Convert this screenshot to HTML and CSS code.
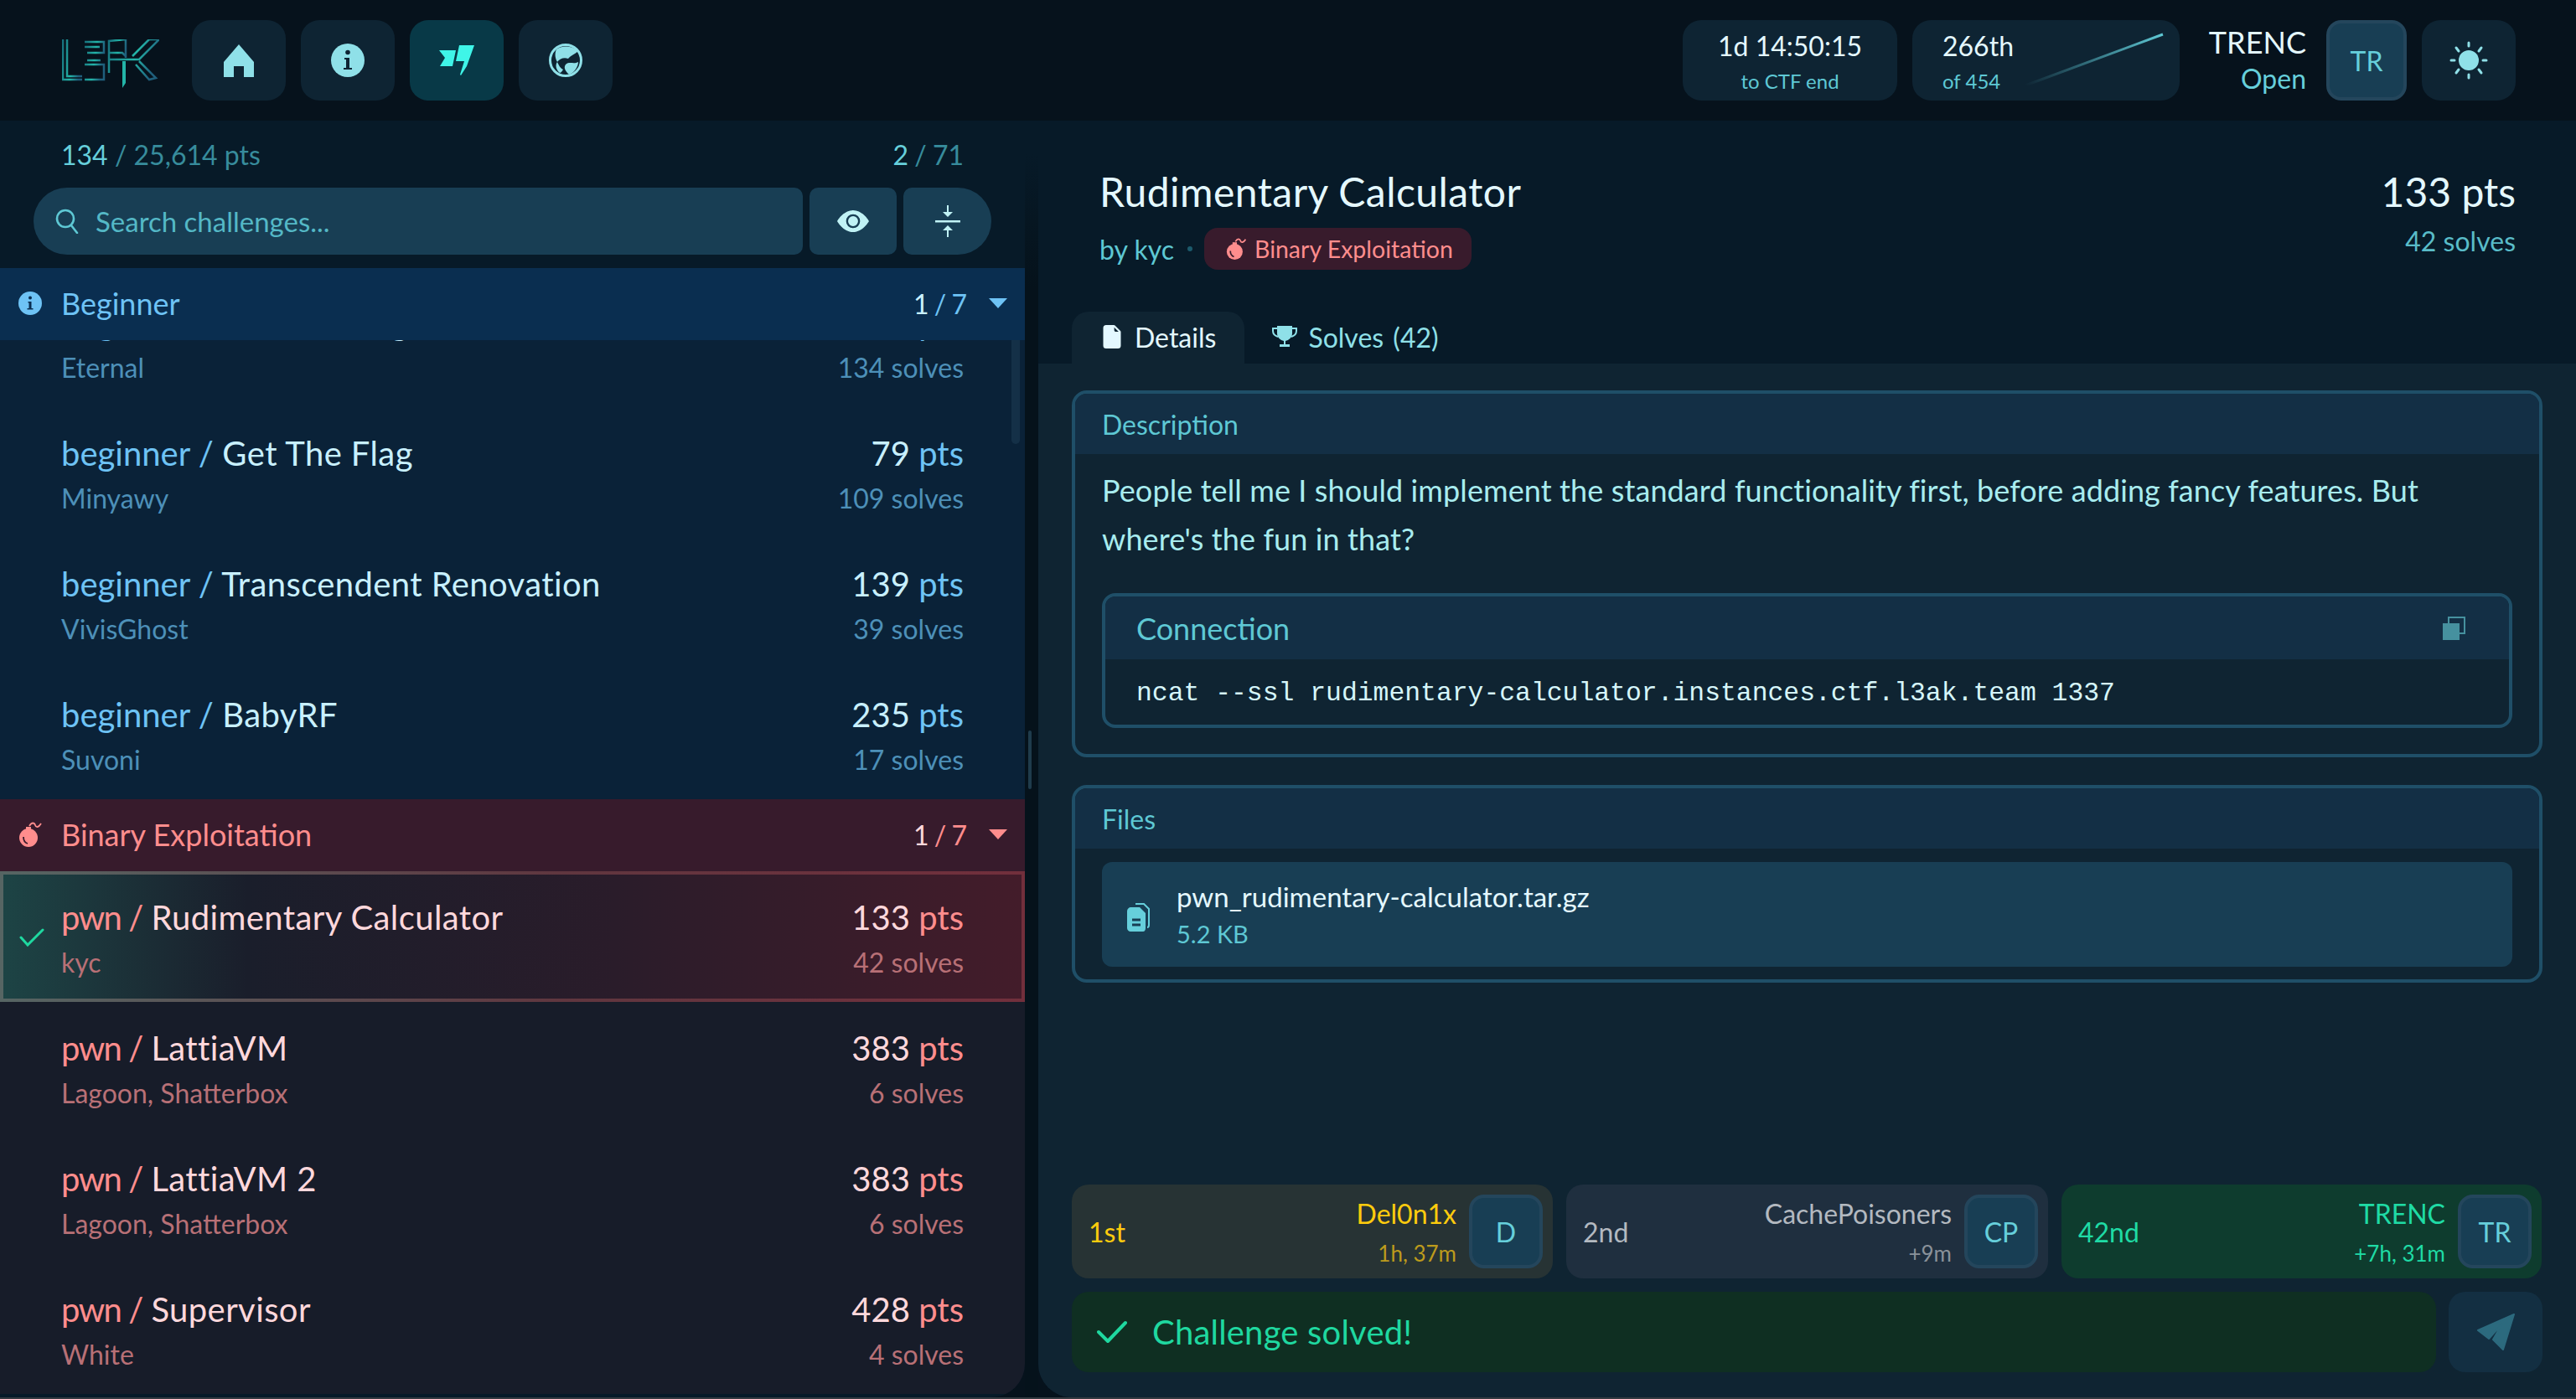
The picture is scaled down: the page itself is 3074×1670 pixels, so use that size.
FILE: index.html
```html
<!DOCTYPE html>
<html lang="en">
<head>
  <meta charset="UTF-8">
  <title>L3AK CTF - Challenges</title>
  <link rel="stylesheet" href="styles.css">
</head>
<body>
<div class="app">

  <header class="topbar">
    <svg class="logo" viewBox="0 0 116 58" fill="none" stroke="url(#logo-grad)" stroke-width="2.5">
      <defs>
        <linearGradient id="logo-grad" x1="0" y1="0" x2="1" y2="0.3">
          <stop offset="0" stop-color="#17707c"/>
          <stop offset="0.6" stop-color="#23b5a8"/>
          <stop offset="1" stop-color="#1f5f7c"/>
        </linearGradient>
      </defs>
      <path d="M1 0V48H24M6 0V44H24"/>
      <path d="M27 3H50V16H30M27 9H45M27 30H50V48H27M30 25H46"/>
      <path d="M56 16V2L76 0V22M56 40V16H72L76 20"/>
      <path d="M56 24H92L116 0H104L84 20M92 26L112 46L104 48L88 30"/>
      <path d="M72 26V58L76 52V26Z" fill="#23b5a8" stroke="none"/>
    </svg>
    <nav class="nav">
      <a class="nav-btn">
        <svg width="38" height="40" viewBox="0 0 38 40" fill="#8fe0e8"><path d="M19 1 37 22V40H25V27H13V40H1V22Z"/></svg>
      </a>
      <a class="nav-btn">
        <svg width="40" height="40" viewBox="0 0 40 40"><circle cx="20" cy="20" r="20" fill="#8fe0e8"/><circle cx="20" cy="10.5" r="2.8" fill="#0e2433"/><path d="M16 17H22V29H25V31H15V29H18V19H16Z" fill="#0e2433"/></svg>
      </a>
      <a class="nav-btn active">
        <svg width="44" height="38" viewBox="0 0 44 38" fill="#3ff5e8"><path d="M1 7H21L17 26H2L8 16Z"/><path d="M25 1H43L34 26 27 37 26 36 31 20H21Z"/></svg>
      </a>
      <a class="nav-btn">
        <svg width="40" height="40" viewBox="0 0 40 40" fill="#8fe0e8"><circle cx="20" cy="20" r="18.500" fill="none" stroke="#8fe0e8" stroke-width="3"/><path d="M9 7C15 2 27 2 35 9 31 13 26 14 23 18 18 16 13 18 10 22 7 17 7 11 9 7Z"/><path d="M20 25C24 21 30 25 35 22 35 28 30 35 24 37 20 33 17 29 20 25Z"/><path d="M10 22C12 26 13 29 17 31 15 34 14 35 13 35 9 32 7 26 10 22Z"/></svg>
      </a>
    </nav>
    <div class="top-right">
      <div class="stat-card timer">
        <div class="stat-main">1d 14:50:15</div>
        <div class="stat-sub">to CTF end</div>
      </div>
      <div class="stat-card rank">
        <div>
          <div class="stat-main">266th</div>
          <div class="stat-sub">of 454</div>
        </div>
        <svg class="spark" width="168" height="66" viewBox="0 0 168 66" fill="none">
          <defs>
            <linearGradient id="spark-grad" x1="0" y1="1" x2="1" y2="0">
              <stop offset="0" stop-color="#5ec8d4" stop-opacity="0"/>
              <stop offset="1" stop-color="#5ec8d4"/>
            </linearGradient>
          </defs>
          <path d="M2 64 166 3" stroke="url(#spark-grad)" stroke-width="3"/>
        </svg>
      </div>
      <div class="me">
        <div class="me-name">TRENC</div>
        <div class="me-state">Open</div>
      </div>
      <div class="avatar avatar-top">TR</div>
      <a class="nav-btn theme">
        <svg width="46" height="46" viewBox="0 0 46 46" stroke="#8fe0e8" stroke-width="3" stroke-linecap="round"><circle cx="23" cy="23" r="12" fill="#8fe0e8" stroke="none"/><path d="M23 2V6M23 40V44M2 23H6M40 23H44M8 8 11 12M35 34 38 38M38 8 35 12M11 34 8 38"/></svg>
      </a>
    </div>
  </header>

  <div class="layout">
    <aside class="sidebar">
      <div class="side-stats">
        <span><b class="hi">134</b> / 25,614 pts</span>
        <span class="mono-count"><b class="hi">2</b> / 71</span>
      </div>
      <div class="search-row">
        <div class="search">
          <svg width="28" height="30" viewBox="0 0 28 30" fill="none" stroke="#5ec8d4" stroke-width="2.6" stroke-linecap="round"><circle cx="12" cy="12" r="10"/><path d="M19 20 26 29"/></svg>
          <span>Search challenges...</span>
        </div>
        <div class="search-btn">
          <svg width="38" height="38" viewBox="0 0 16 16" fill="#c0f2f5"><path d="M10.5 8a2.5 2.5 0 1 1-5 0 2.5 2.5 0 0 1 5 0z"/><path d="M0 8s3-5.5 8-5.5S16 8 16 8s-3 5.5-8 5.5S0 8 0 8zm8 3.5a3.5 3.5 0 1 0 0-7 3.5 3.5 0 0 0 0 7z"/></svg>
        </div>
        <div class="search-btn last">
          <svg width="30" height="38" viewBox="0 0 30 38" fill="#c0f2f5"><path d="M0 18H30V20.500H0Z"/><path d="M14 0H16V8H21L15 14 9 8H14Z"/><path d="M14 38H16V30H21L15 24 9 30H14Z"/></svg>
        </div>
      </div>

      <div class="list">
        <section class="group beginner">
          <div class="group-head">
            <svg class="group-icon" width="28" height="28" viewBox="0 0 28 28"><circle cx="14" cy="14" r="14" fill="#6ec3f5"/><circle cx="14" cy="7.500" r="2" fill="#0a2e50"/><path d="M11.500 12H15.500V20H17.500V21.500H10.500V20H12.500V13.500H11.500Z" fill="#0a2e50"/></svg>
            <span class="group-name">Beginner</span>
            <span class="group-count"><b>1</b> / 7</span>
            <span class="caret"></span>
          </div>
          <div class="row first">
            <div class="row-text">
              <div class="row-title"><span class="prefix">beginner /</span> Discord Flag</div>
              <div class="row-sub">Eternal</div>
            </div>
            <div class="row-num">
              <div class="row-title">61 <span class="unit">pts</span></div>
              <div class="row-sub">134 solves</div>
            </div>
          </div>
          <div class="row">
            <div class="row-text">
              <div class="row-title"><span class="prefix">beginner /</span> Get The Flag</div>
              <div class="row-sub">Minyawy</div>
            </div>
            <div class="row-num">
              <div class="row-title">79 <span class="unit">pts</span></div>
              <div class="row-sub">109 solves</div>
            </div>
          </div>
          <div class="row">
            <div class="row-text">
              <div class="row-title"><span class="prefix">beginner /</span> Transcendent Renovation</div>
              <div class="row-sub">VivisGhost</div>
            </div>
            <div class="row-num">
              <div class="row-title">139 <span class="unit">pts</span></div>
              <div class="row-sub">39 solves</div>
            </div>
          </div>
          <div class="row">
            <div class="row-text">
              <div class="row-title"><span class="prefix">beginner /</span> BabyRF</div>
              <div class="row-sub">Suvoni</div>
            </div>
            <div class="row-num">
              <div class="row-title">235 <span class="unit">pts</span></div>
              <div class="row-sub">17 solves</div>
            </div>
          </div>
        </section>

        <section class="group pwn">
          <div class="group-head">
            <svg class="group-icon" width="30" height="30" viewBox="0 0 30 30"><circle cx="12" cy="19" r="11" fill="#ff8d8d"/><path d="M9 6H15V10H9Z" fill="#ff8d8d"/><path d="M13 5C16 0 19 1 20 4S24 7 27 2" fill="none" stroke="#ff8d8d" stroke-width="1.800"/><path d="M6 18C6 22 8 25 11 26" fill="none" stroke="#371b2c" stroke-width="1.800"/></svg>
            <span class="group-name">Binary Exploitation</span>
            <span class="group-count"><b>1</b> / 7</span>
            <span class="caret"></span>
          </div>
          <div class="row selected">
            <svg class="row-check" width="30" height="22" viewBox="0 0 30 22" fill="none" stroke="#1fd8a0" stroke-width="3" stroke-linecap="round"><path d="M2 11 10 20 28 2"/></svg>
            <div class="row-text">
              <div class="row-title"><span class="prefix">pwn /</span> Rudimentary Calculator</div>
              <div class="row-sub">kyc</div>
            </div>
            <div class="row-num">
              <div class="row-title">133 <span class="unit">pts</span></div>
              <div class="row-sub">42 solves</div>
            </div>
          </div>
          <div class="row">
            <div class="row-text">
              <div class="row-title"><span class="prefix">pwn /</span> LattiaVM</div>
              <div class="row-sub">Lagoon, Shatterbox</div>
            </div>
            <div class="row-num">
              <div class="row-title">383 <span class="unit">pts</span></div>
              <div class="row-sub">6 solves</div>
            </div>
          </div>
          <div class="row">
            <div class="row-text">
              <div class="row-title"><span class="prefix">pwn /</span> LattiaVM 2</div>
              <div class="row-sub">Lagoon, Shatterbox</div>
            </div>
            <div class="row-num">
              <div class="row-title">383 <span class="unit">pts</span></div>
              <div class="row-sub">6 solves</div>
            </div>
          </div>
          <div class="row">
            <div class="row-text">
              <div class="row-title"><span class="prefix">pwn /</span> Supervisor</div>
              <div class="row-sub">White</div>
            </div>
            <div class="row-num">
              <div class="row-title">428 <span class="unit">pts</span></div>
              <div class="row-sub">4 solves</div>
            </div>
          </div>
        </section>
      </div>
      <div class="scrollbar"></div>
    </aside>

    <div class="gutter"><div class="handle"></div></div>

    <main class="main">
      <div class="chal-head">
        <div>
          <h1 class="chal-title">Rudimentary Calculator</h1>
          <div class="chal-meta">
            <span>by kyc</span>
            <span class="dot"></span>
            <span class="pill">
              <svg width="26" height="28" viewBox="0 0 30 30"><circle cx="12" cy="19" r="11" fill="#ff8d8d"/><path d="M9 6H15V10H9Z" fill="#ff8d8d"/><path d="M13 5C16 0 19 1 20 4S24 7 27 2" fill="none" stroke="#ff8d8d" stroke-width="2"/><path d="M6 18C6 22 8 25 11 26" fill="none" stroke="#381b2c" stroke-width="2"/></svg>
              Binary Exploitation
            </span>
          </div>
        </div>
        <div class="chal-score">
          <div class="chal-pts">133 pts</div>
          <div class="chal-solves">42 solves</div>
        </div>
      </div>

      <div class="tabs">
        <div class="tab active">
          <svg width="22" height="28" viewBox="2 0 12 16" fill="#e4f8ff"><path d="M4 0h5.293A1 1 0 0 1 10 .293L13.707 4a1 1 0 0 1 .293.707V14a2 2 0 0 1-2 2H4a2 2 0 0 1-2-2V2a2 2 0 0 1 2-2zm5.500 1.500v2a1 1 0 0 0 1 1h2l-3-3z"/></svg>
          Details
        </div>
        <div class="tab">
          <svg width="30" height="26" viewBox="0 0 30 26" fill="#8fe0e8"><path d="M6 0H24V9C24 14 20 17 16 18V22H21V25H9V22H14V18C10 17 6 14 6 9Z"/><path d="M6 3H1V6C1 10 4 12 7 13M24 3H29V6C29 10 26 12 23 13" fill="none" stroke="#8fe0e8" stroke-width="2"/></svg>
          Solves (42)
        </div>
      </div>

      <div class="content">
        <section class="box">
          <div class="box-head">Description</div>
          <div class="box-body">
            <p class="desc">People tell me I should implement the standard functionality first, before adding fancy features. But where's the fun in that?</p>
            <div class="conn">
              <div class="conn-head">
                <span>Connection</span>
                <svg width="28" height="28" viewBox="0 0 28 28" fill="none"><rect x="8" y="1" width="19" height="19" stroke="#46919f" stroke-width="2"/><rect x="1" y="8" width="20" height="20" fill="#46919f"/></svg>
              </div>
              <div class="conn-code">ncat --ssl rudimentary-calculator.instances.ctf.l3ak.team 1337</div>
            </div>
          </div>
        </section>

        <section class="box files">
          <div class="box-head">Files</div>
          <div class="box-body">
            <div class="file">
              <svg width="28" height="34" viewBox="0 0 28 34" fill="none"><path d="M10 1H20L26 7V26C26 28 25 29 24 29" stroke="#66cfdb" stroke-width="2"/><path d="M5 5H15L22 12V30C22 32 21 34 19 34H4C2 34 0 32 0 30V10C0 7 2 5 5 5Z" fill="#66cfdb"/><path d="M6 20H16M6 26H16" stroke="#183e54" stroke-width="3"/></svg>
              <div class="file-text">
                <div class="file-name">pwn_rudimentary-calculator.tar.gz</div>
                <div class="file-size">5.2 KB</div>
              </div>
            </div>
          </div>
        </section>

        <div class="podium">
          <div class="solver gold">
            <span class="place">1st</span>
            <div class="solver-info">
              <div class="solver-name">Del0n1x</div>
              <div class="solver-time">1h, 37m</div>
            </div>
            <div class="avatar">D</div>
          </div>
          <div class="solver silver">
            <span class="place">2nd</span>
            <div class="solver-info">
              <div class="solver-name">CachePoisoners</div>
              <div class="solver-time">+9m</div>
            </div>
            <div class="avatar">CP</div>
          </div>
          <div class="solver mine">
            <span class="place">42nd</span>
            <div class="solver-info">
              <div class="solver-name">TRENC</div>
              <div class="solver-time">+7h, 31m</div>
            </div>
            <div class="avatar">TR</div>
          </div>
        </div>

        <div class="flag-row">
          <div class="flag">
            <svg width="36" height="28" viewBox="0 0 36 28" fill="none" stroke="#1fd8a0" stroke-width="4" stroke-linecap="round" stroke-linejoin="round"><path d="M2 14 13 25 34 3"/></svg>
            Challenge solved!
          </div>
          <div class="send">
            <svg width="46" height="44" viewBox="0 0 46 44" fill="#2c6a7e" stroke="#2c6a7e" stroke-width="2" stroke-linejoin="round"><path d="M45 1 2 20 15 30 31 12 20 31 32 43Z"/></svg>
          </div>
        </div>
      </div>
    </main>
  </div>
</div>
</body>
</html>
```

FILE: styles.css
```css
* {
  box-sizing: border-box;
}

html, body {
  margin: 0;
  height: 100%;
  overflow: hidden;
}

body {
  font-family: "Lato", "Liberation Sans", sans-serif;
  background-color: #06121c;
  color: #e4f8ff;
}

b {
  font-weight: inherit;
}

.app {
  height: 1670px;
  display: flex;
  flex-direction: column;
  border-bottom: 2px solid #333a40;
}

/* Top bar */
.topbar {
  height: 144px;
  flex: none;
  display: flex;
  align-items: center;
  padding: 0 72px 0 74px;
}

.logo {
  width: 116px;
  height: 58px;
  margin: 8px 39px 0 0;
}

.nav {
  display: flex;
  gap: 18px;
}

.nav-btn {
  width: 112px;
  height: 96px;
  border-radius: 22px;
  background-color: #0e2433;
  display: flex;
  align-items: center;
  justify-content: center;
}

.nav-btn.active {
  background-color: #083947;
}

.top-right {
  margin-left: auto;
  display: flex;
  align-items: center;
}

.stat-card {
  height: 96px;
  border-radius: 22px;
  background-color: #0e2433;
}

.stat-main {
  font-size: 32px;
  line-height: 40px;
}

.stat-sub {
  font-size: 24px;
  line-height: 32px;
  margin-top: 6px;
  color: #5ec8d4;
}

.timer {
  width: 256px;
  padding-top: 11px;
  text-align: center;
}

.rank {
  width: 319px;
  margin-left: 18px;
  padding: 11px 18px 0 36px;
  display: flex;
  justify-content: space-between;
}

.spark {
  margin-top: 3px;
}

.me {
  width: 151px;
  text-align: right;
}

.me-name {
  font-size: 36px;
  line-height: 44px;
}

.me-state {
  font-size: 32px;
  line-height: 44px;
  color: #66cfdb;
}

.avatar {
  width: 88px;
  height: 88px;
  flex: none;
  border: 4px solid #24465c;
  border-radius: 18px;
  background-color: #183e54;
  color: #66cfdb;
  font-size: 32px;
  display: flex;
  align-items: center;
  justify-content: center;
}

.avatar-top {
  width: 96px;
  height: 96px;
  margin: 0 18px 0 24px;
}

.theme {
  width: 112px;
}

/* Page split */
.layout {
  flex: 1;
  min-height: 0;
  display: flex;
}

.sidebar {
  width: 1223px;
  flex: none;
  position: relative;
  overflow: hidden;
  display: flex;
  flex-direction: column;
  background-color: #071a28;
  border-bottom-right-radius: 40px;
}

.gutter {
  width: 16px;
  flex: none;
  background: linear-gradient(#071a28 40px, #05121b 200px);
  padding-top: 728px;
  display: flex;
  justify-content: center;
}

.handle {
  width: 4px;
  height: 70px;
  margin-left: -4px;
  border-radius: 2px;
  background-color: #1f3c4c;
}

.side-stats {
  height: 80px;
  flex: none;
  display: flex;
  justify-content: space-between;
  align-items: center;
  padding: 0 73px;
  font-size: 32px;
  color: #378c9c;
}

.mono-count {
  word-spacing: -1px;
}

.hi {
  color: #66cfdb;
}

.search-row {
  height: 80px;
  flex: none;
  display: flex;
  gap: 8px;
  margin: 0 40px 16px;
}

.search {
  width: 918px;
  display: flex;
  align-items: center;
  gap: 20px;
  padding-left: 26px;
  background-color: #183e54;
  border-radius: 40px 10px 10px 40px;
  font-size: 33px;
  color: #54b8c6;
}

.search-btn {
  width: 104px;
  display: flex;
  align-items: center;
  justify-content: center;
  background-color: #183e54;
  border-radius: 10px;
}

.search-btn.last {
  width: 105px;
  border-radius: 10px 40px 40px 10px;
}

/* Challenge list */
.list {
  flex: 1;
  overflow: hidden;
}

.group-head {
  height: 86px;
  position: relative;
  z-index: 1;
  display: flex;
  align-items: center;
  padding: 0 21px 2px 22px;
  font-size: 36px;
}

.group-icon {
  flex: none;
}

.group-name {
  margin-left: 23px;
}

.pwn .group-name {
  margin-left: 21px;
}

.group-count {
  margin-left: auto;
  font-size: 32px;
  word-spacing: -2px;
}

.caret {
  width: 0;
  height: 0;
  margin-left: 26px;
  border-left: 11px solid transparent;
  border-right: 11px solid transparent;
  border-top: 12px solid currentColor;
}

.row {
  height: 156px;
  position: relative;
  display: flex;
  justify-content: space-between;
  padding: 30px 73px 0;
}

.row.first {
  margin-top: -76px;
}

.row-title {
  font-size: 40px;
  line-height: 50px;
}

.row-text .row-title {
  letter-spacing: 0.4px;
}

.row-sub {
  font-size: 32px;
  line-height: 42px;
  margin-top: 8px;
}

.row-num {
  text-align: right;
}

.scrollbar {
  position: absolute;
  left: 1207px;
  top: 236px;
  width: 10px;
  height: 150px;
  border-radius: 5px;
  background-color: rgba(120, 180, 210, 0.1);
}

.beginner {
  background-color: #0a2238;
  color: #c8f0ff;
}

.beginner .group-head {
  background-color: #0a2e50;
  color: #6ec3f5;
}

.beginner .group-count b {
  color: #c8f0ff;
}

.beginner .prefix,
.beginner .unit {
  color: #6ec3f5;
}

.beginner .prefix {
  letter-spacing: 0;
}

.beginner .row-sub {
  color: #4d90b8;
}

.pwn {
  background-color: #171c29;
  color: #ffd8dc;
}

.pwn .group-head {
  background-color: #371b2c;
  color: #ff8d8d;
}

.pwn .group-count b {
  color: #ffd8dc;
}

.pwn .prefix,
.pwn .unit {
  color: #ff8d8d;
}

.pwn .prefix {
  letter-spacing: -1.5px;
}

.pwn .row-sub {
  color: #b87076;
}

.row.selected {
  padding: 26px 69px 0;
  border: 4px solid;
  border-image: linear-gradient(90deg, #566563, #60363f 55%, #722f3c) 1;
  background: linear-gradient(90deg, #1d4445, #1a1e2b 24%, #2a1c2a 60%, #431c2a);
}

.row-check {
  position: absolute;
  left: 19px;
  top: 64px;
}

/* Challenge panel */
.main {
  flex: 1;
  min-width: 0;
  display: flex;
  flex-direction: column;
  overflow: hidden;
  background-color: #071a28;
  border-bottom-left-radius: 40px;
}

.chal-head {
  height: 228px;
  flex: none;
  display: flex;
  justify-content: space-between;
  padding: 54px 72px 0 73px;
}

.chal-title {
  margin: 0;
  font-size: 48px;
  font-weight: 400;
  line-height: 62px;
  letter-spacing: 0.45px;
}

.chal-meta {
  display: flex;
  align-items: center;
  margin-top: 12px;
  font-size: 32px;
  color: #5ec8d4;
}

.dot {
  width: 6px;
  height: 6px;
  margin: 0 14px 0 16px;
  border-radius: 50%;
  background-color: #1c5a6c;
}

.pill {
  height: 50px;
  width: 319px;
  display: flex;
  align-items: center;
  gap: 8px;
  padding-left: 26px;
  border-radius: 16px;
  background-color: #381b2c;
  color: #ff8d8d;
  font-size: 28.5px;
}

.chal-score {
  text-align: right;
}

.chal-pts {
  font-size: 48px;
  line-height: 62px;
}

.chal-solves {
  font-size: 32px;
  line-height: 40px;
  margin-top: 8px;
  color: #59bcc8;
}

.tabs {
  height: 62px;
  flex: none;
  display: flex;
  padding-left: 40px;
}

.tab {
  display: flex;
  align-items: center;
  gap: 16px;
  padding: 0 34px 2px 37px;
  font-size: 32px;
  color: #8fe0e8;
  border-radius: 20px 20px 0 0;
}

.tab + .tab {
  padding-left: 33px;
  gap: 13px;
  word-spacing: 3px;
}

.tab.active {
  background-color: #0f2432;
  color: #e4f8ff;
}

.content {
  flex: 1;
  min-height: 0;
  display: flex;
  flex-direction: column;
  padding: 32px 40px 30px;
  background-color: #0f2432;
}

.box {
  border: 4px solid #1f4f68;
  border-radius: 18px;
  overflow: hidden;
}

.box-head {
  height: 72px;
  display: flex;
  align-items: center;
  padding-left: 32px;
  background-color: #132f45;
  color: #5ec8d4;
  font-size: 32px;
}

.box-body {
  padding: 15px 32px 31px;
}

.desc {
  margin: 0 0 36px;
  font-size: 36px;
  line-height: 57.6px;
  letter-spacing: 0.1px;
  color: #a8ecef;
}

.conn {
  height: 161px;
  border: 4px solid #1f4f68;
  border-radius: 16px;
  overflow: hidden;
}

.conn-head {
  height: 75px;
  display: flex;
  justify-content: space-between;
  align-items: center;
  padding: 0 52px 0 37px;
  background-color: #132f45;
  color: #5ec8d4;
  font-size: 36px;
}

.conn-code {
  padding: 22px 37px 0;
  font-family: "Liberation Mono", monospace;
  font-size: 31.4px;
  line-height: 38px;
  color: #d6f6fa;
}

.files {
  margin-top: 33px;
}

.files .box-body {
  padding: 16px 32px 15px;
}

.file {
  height: 125px;
  display: flex;
  align-items: center;
  gap: 31px;
  padding-left: 30px;
  border-radius: 12px;
  background-color: #183e54;
}

.file svg {
  margin-top: 6px;
}

.file-name {
  font-size: 33px;
  line-height: 40px;
}

.file-size {
  margin-top: 6px;
  font-size: 29px;
  line-height: 38px;
  color: #5ec8d4;
}

.podium {
  margin-top: auto;
  display: grid;
  grid-template-columns: 574px 575px 573px;
  gap: 16px;
}

.solver {
  height: 112px;
  display: flex;
  align-items: center;
  padding: 0 12px 0 20px;
  border-radius: 20px;
}

.solver-info {
  margin: 0 15px 0 auto;
  text-align: right;
}

.place {
  font-size: 32px;
}

.solver-name {
  font-size: 32px;
  line-height: 46px;
}

.solver-time {
  font-size: 26px;
  line-height: 36px;
  margin-top: 6px;
}

.gold {
  background-color: #273334;
  color: #ffcc0d;
}

.gold .solver-time {
  color: #bd9b1c;
}

.silver {
  background-color: #1f2f3f;
  color: #b3b9c0;
}

.silver .solver-time {
  color: #8a929a;
}

.mine {
  background-color: #0e3c2e;
  color: #1fdba5;
}

.flag-row {
  height: 96px;
  flex: none;
  display: flex;
  gap: 15px;
  margin-top: 16px;
}

.flag {
  flex: 1;
  display: flex;
  align-items: center;
  gap: 30px;
  padding-left: 30px;
  border-radius: 20px;
  background-color: #0f2f22;
  color: #1fd8a0;
  font-size: 40px;
  letter-spacing: 0.2px;
}

.send {
  width: 112px;
  display: flex;
  align-items: center;
  justify-content: center;
  border-radius: 20px;
  background-color: #132f42;
}
```
